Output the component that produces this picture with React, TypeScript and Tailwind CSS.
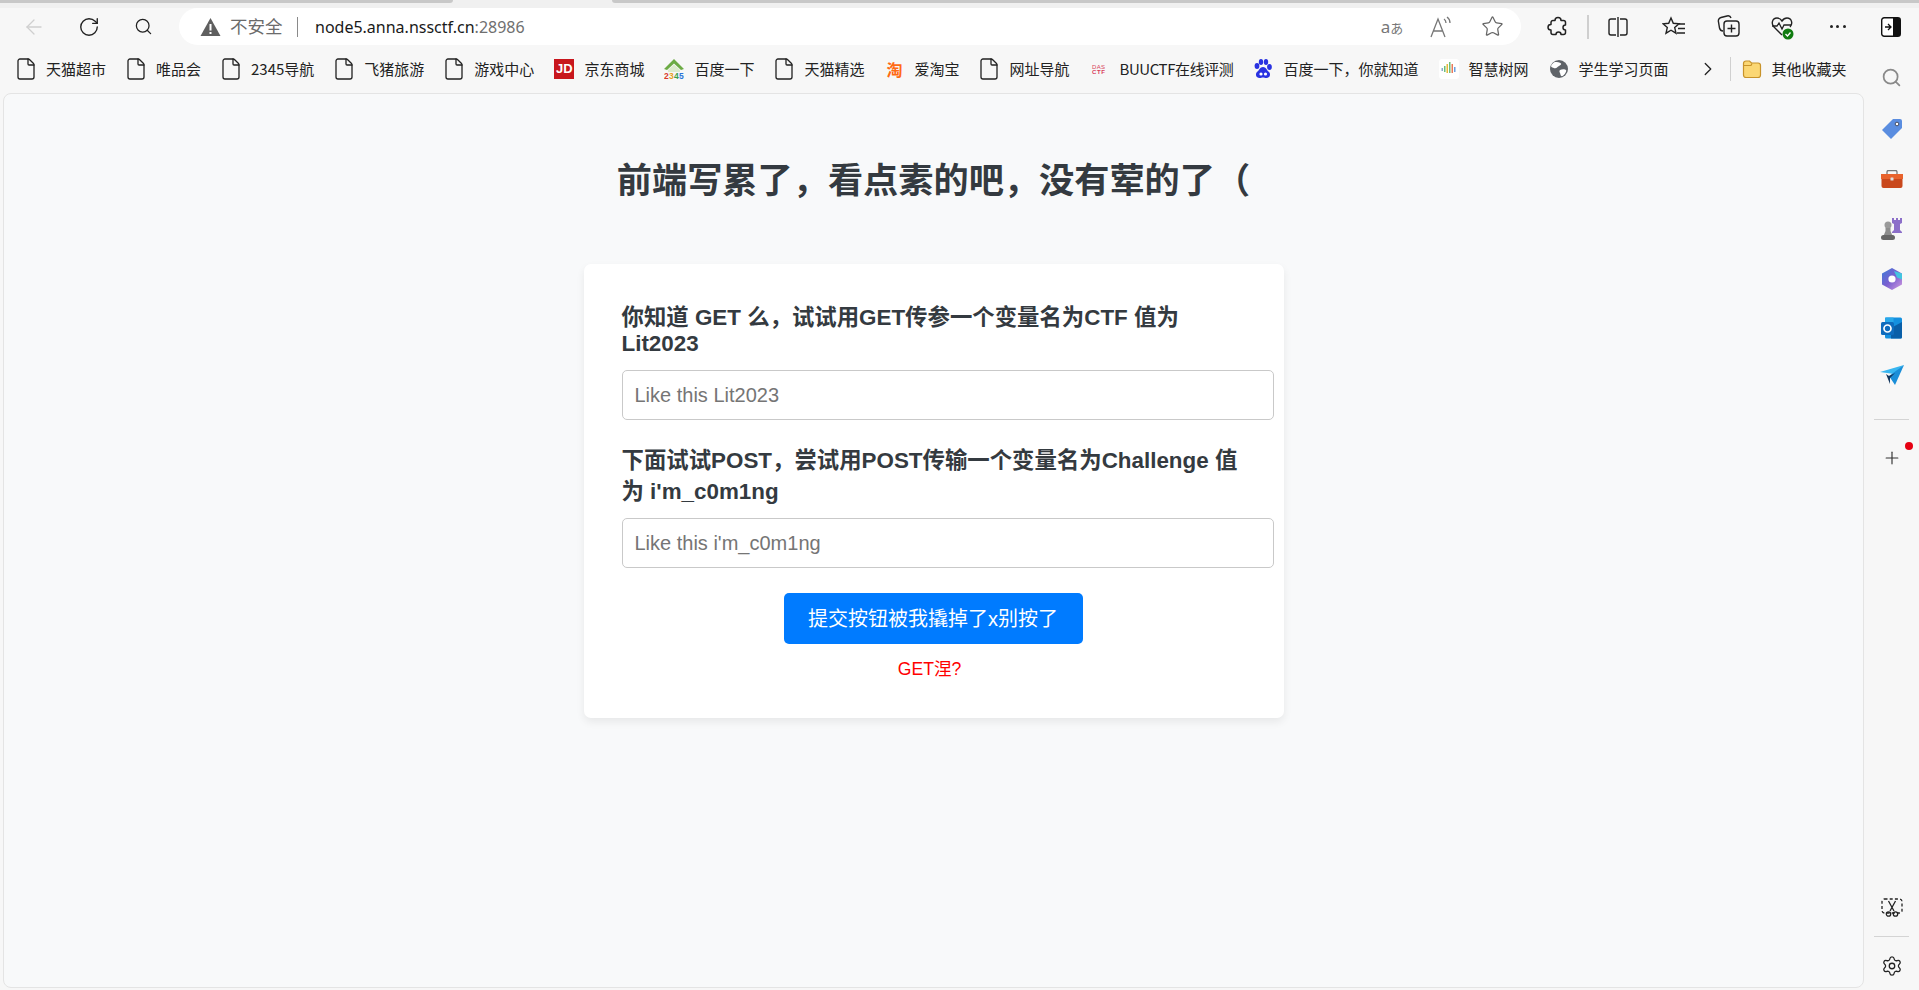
import React from 'react';
import { ArrowLeft, RotateCw, Search, Star, File, ChevronRight, Plus, Settings } from 'lucide-react';

const cjk = "font-['Liberation_Sans','Noto_Sans_CJK_SC',sans-serif]";

function Slot({ w, children }: { w: number; children: React.ReactNode }) {
  return (
    <div className="flex items-center justify-center shrink-0 h-full" style={{ width: w }}>
      {children}
    </div>
  );
}

const FileIcon = () => <File className="w-[24px] h-[24px] shrink-0 text-[#222]" strokeWidth={1.3} />;

const JdIcon = () => (
  <div className="w-[20px] h-[20px] bg-[#c8161d] text-white text-[13px] font-bold flex items-center justify-center font-['Liberation_Sans',sans-serif]">
    JD
  </div>
);

const HomeIcon = () => (
  <svg width="20" height="22" viewBox="0 0 20 22" className="shrink-0">
    <path d="M0 11 L10 1 L20 11 L17 12 L10 5.5 L3 12 Z" fill="#6cab45" />
    <path d="M4 12 L10 6.5 L16 12 L16 14 L4 14 Z" fill="#dcebcd" />
    <text x="0" y="21" fontSize="8.5" fontWeight="700" fontFamily="Liberation Sans" fill="#d93a2b">2</text>
    <text x="5" y="21" fontSize="8.5" fontWeight="700" fontFamily="Liberation Sans" fill="#e8a020">3</text>
    <text x="10" y="21" fontSize="8.5" fontWeight="700" fontFamily="Liberation Sans" fill="#3aa04a">4</text>
    <text x="15" y="21" fontSize="8.5" fontWeight="700" fontFamily="Liberation Sans" fill="#2a73d9">5</text>
  </svg>
);

const TaoIcon = () => (
  <div className="w-[20px] h-[20px] text-[#ff6a13] text-[16px] font-bold leading-none flex items-center justify-center font-['Noto_Sans_CJK_SC',sans-serif]">
    淘
  </div>
);

const BuuIcon = () => (
  <svg width="16" height="12" viewBox="0 0 16 12" className="shrink-0">
    <text x="1" y="5.5" fontSize="6" fontFamily="Liberation Sans" fill="#d8405a" textLength="13">DAS</text>
    <text x="1" y="11" fontSize="6" fontWeight="700" fontFamily="Liberation Sans" fill="#d8405a" textLength="13">CTF</text>
  </svg>
);

const BaiduIcon = () => (
  <svg width="20" height="22" viewBox="0 0 20 22" className="shrink-0">
    <g fill="#2932e1">
      <ellipse cx="4" cy="8" rx="2.4" ry="3" />
      <ellipse cx="8" cy="4" rx="2.2" ry="3" />
      <ellipse cx="13" cy="4" rx="2.2" ry="3" />
      <ellipse cx="16.5" cy="9" rx="2.4" ry="3" />
      <path d="M10 9c-3 0-3.5 3-6 5-2 2-1 6 2.5 6 1.5 0 2.5-.6 3.5-.6s2 .6 3.5.6c3.5 0 4.5-4 2.5-6-2.5-2-3-5-6-5z" />
    </g>
    <circle cx="8" cy="16" r="1.6" fill="#fff" />
    <circle cx="12.5" cy="16" r="1.6" fill="#fff" />
  </svg>
);

const BarsIcon = () => (
  <svg width="20" height="20" viewBox="0 0 20 20" className="shrink-0">
    <rect width="20" height="20" rx="3" fill="#fff" />
    <rect x="2.5" y="9" width="1.5" height="3" fill="#8ac" />
    <rect x="5" y="7" width="1.5" height="6" fill="#6bbf7a" />
    <rect x="7.5" y="5" width="1.5" height="9" fill="#e8b93a" />
    <rect x="10" y="3" width="1.5" height="11" fill="#6bbf7a" />
    <rect x="12.5" y="5" width="1.5" height="9" fill="#e87a5a" />
    <rect x="15" y="8" width="1.5" height="5" fill="#6a9fe0" />
  </svg>
);

const GlobeIcon = () => (
  <svg width="20" height="20" viewBox="0 0 20 20" className="shrink-0">
    <circle cx="10" cy="10" r="9" fill="#5f6368" />
    <path d="M6 3c2 0 5 0 6 1.5S9 7 8 8.5 4 9 2.5 8 4.5 3.5 6 3zM11 11c2-1 5-1 6 0s-1.5 5-3.5 6-2-2-2.5-3-1-2 0-3z" fill="#fff" />
  </svg>
);

const FolderIcon = () => (
  <svg width="20" height="20" viewBox="0 0 20 20" className="shrink-0">
    <path d="M1.5 4.5C1.5 3 2.5 2 4 2h3.5l2 2H16c1.5 0 2.5 1 2.5 2.5V16c0 1.5-1 2.5-2.5 2.5H4c-1.5 0-2.5-1-2.5-2.5z" fill="#fbd774" stroke="#c8932a" strokeWidth="1.2" />
    <path d="M1.5 6.5H9l1-2" fill="none" stroke="#c8932a" strokeWidth="1.2" />
  </svg>
);

const bookmarks: { icon: React.ReactNode; label: string; tight?: boolean }[] = [
  { icon: <FileIcon />, label: '天猫超市' },
  { icon: <FileIcon />, label: '唯品会' },
  { icon: <FileIcon />, label: '2345导航' },
  { icon: <FileIcon />, label: '飞猪旅游' },
  { icon: <FileIcon />, label: '游戏中心' },
  { icon: <JdIcon />, label: '京东商城' },
  { icon: <HomeIcon />, label: '百度一下' },
  { icon: <FileIcon />, label: '天猫精选' },
  { icon: <TaoIcon />, label: '爱淘宝' },
  { icon: <FileIcon />, label: '网址导航' },
  { icon: <BuuIcon />, label: 'BUUCTF在线评测', tight: true },
  { icon: <BaiduIcon />, label: '百度一下，你就知道' },
  { icon: <BarsIcon />, label: '智慧树网' },
  { icon: <GlobeIcon />, label: '学生学习页面' },
];

function TabStrip() {
  return (
    <div className="h-[8px] bg-[#f0f0f0] flex items-start shrink-0">
      <div className="w-[453px] h-[3px] bg-[#c8c8c8] rounded-br-[3px]" />
      <div className="ml-[159px] flex-1 h-[3px] bg-[#c8c8c8] rounded-bl-[3px]" />
    </div>
  );
}

function Toolbar() {
  return (
    <div className="h-[37px] flex items-center shrink-0 text-[#222]">
      <div className="w-[6px]" />
      <Slot w={56}><ArrowLeft className="w-[24px] h-[24px] text-[#cfcfcf]" strokeWidth={1.3} /></Slot>
      <Slot w={54}><RotateCw className="w-[22px] h-[22px]" strokeWidth={1.5} /></Slot>
      <Slot w={55}><Search className="w-[19px] h-[19px]" strokeWidth={1.6} /></Slot>
      <div className="ml-[8px] w-[1342px] h-[37px] bg-white rounded-full flex items-center pl-[21px] shrink-0">
        <svg width="21" height="20" viewBox="0 0 21 20" className="shrink-0">
          <path d="M10.5 1 L20.5 19 H0.5 Z" fill="#5f5f5f" />
          <rect x="9.5" y="7" width="2" height="6.5" fill="#fff" />
          <rect x="9.5" y="15" width="2" height="2" fill="#fff" />
        </svg>
        <span className="ml-[9px] text-[17.5px] text-[#6b6b6b] font-['Noto_Sans_CJK_SC',sans-serif]">不安全</span>
        <span className="ml-[14px] w-[1.5px] h-[20px] bg-[#8a8a8a]" />
        <span className="ml-[17px] text-[16px] text-[#1a1a1a] font-['Noto_Sans',sans-serif]">
          node5.anna.nssctf.cn<span className="text-[#6f6f6f]">:28986</span>
        </span>
        <div className="ml-auto flex items-center h-full pr-[4px]">
          <Slot w={50}>
            <span className="text-[17px] text-[#777] font-['Noto_Sans','Noto_Sans_CJK_JP',sans-serif]">a<span className="text-[13px]">あ</span></span>
          </Slot>
          <Slot w={50}>
            <svg width="26" height="24" viewBox="0 0 26 24" fill="none" stroke="#777" strokeWidth="1.3">
              <path d="M2 22 L9 4 L16 22 M4.5 16 H13.5" />
              <path d="M15 4c1.5 1 2 2.5 2 4M18 2c2 1.5 3 3.5 3 6" />
            </svg>
          </Slot>
          <Slot w={50}><Star className="w-[23px] h-[23px] text-[#666]" strokeWidth={1.3} /></Slot>
        </div>
      </div>
      <div className="w-[13px]" />
      <Slot w={48}>
        <svg width="22" height="22" viewBox="0 0 22 22" fill="none" stroke="#222" strokeWidth="1.5" strokeLinejoin="round">
          <path d="M11 1.5c2 0 3 1.5 3 3h2.5a2 2 0 0 1 2 2V9c-1.5 0-2.5 1-2.5 2.5s1 2.500 2.500 2.500v2.500a2 2 0 0 1-2 2H14c0-1.500-1-2.500-2.500-2.500S9 17 9 18.500H6a2 2 0 0 1-2-2V14c-1.500 0-3-1-3-2.800S2.500 8.500 4 8.500v-2a2 2 0 0 1 2-2h2c0-1.500 1-3 3-3z" />
        </svg>
      </Slot>
      <div className="w-[1.5px] h-[24px] bg-[#cfcfcf] ml-[5px] mr-[2px]" />
      <Slot w={54}>
        <svg width="22" height="22" viewBox="0 0 22 22" fill="none" stroke="#222" strokeWidth="1.4">
          <path d="M9 3H4a2 2 0 0 0-2 2v12a2 2 0 0 0 2 2h5M13 3h5a2 2 0 0 1 2 2v12a2 2 0 0 1-2 2h-5M11 1v20" />
        </svg>
      </Slot>
      <Slot w={58}>
        <svg width="24" height="22" viewBox="0 0 24 22" fill="none" stroke="#222" strokeWidth="1.4">
          <path d="M9 2l2.3 5.3 5.7.5-4.3 3.8 1.3 5.6L9 14.200 4 17.200l1.300-5.600L1 7.800l5.700-.5z" />
          <path d="M17 8h6M16 12.5h7M15 17h8" />
        </svg>
      </Slot>
      <Slot w={52}>
        <svg width="24" height="24" viewBox="0 0 24 24" fill="none" stroke="#222" strokeWidth="1.4">
          <path d="M6 16c-2 0-3-1-3.5-3L1.5 7C1 5 2 3 4 2.5l6-1.5c2-.5 3.5.5 4 2" />
          <rect x="7" y="6" width="15" height="15" rx="3" />
          <path d="M14.5 9.5v8M10.5 13.5h8" />
        </svg>
      </Slot>
      <Slot w={56}>
        <svg width="26" height="26" viewBox="0 0 26 26">
          <path d="M12 21L4 13C1 10 2 4 7 4c2.5 0 4 1.5 5 3 1-1.5 2.5-3 5-3 5 0 6 6 3 9" fill="none" stroke="#222" strokeWidth="1.4" />
          <path d="M2 12h5l2-3 3 6 2-4h7" fill="none" stroke="#222" strokeWidth="1.3" />
          <circle cx="18" cy="20" r="5.5" fill="#107c10" />
          <path d="M15.5 20l2 2 3-3.5" fill="none" stroke="#fff" strokeWidth="1.3" />
        </svg>
      </Slot>
      <Slot w={54}>
        <span className="flex gap-[3.5px]">
          <i className="w-[3px] h-[3px] rounded-full bg-[#222]" />
          <i className="w-[3px] h-[3px] rounded-full bg-[#222]" />
          <i className="w-[3px] h-[3px] rounded-full bg-[#222]" />
        </span>
      </Slot>
      <Slot w={52}>
        <svg width="20" height="20" viewBox="0 0 20 20">
          <rect x="0.7" y="0.7" width="18.6" height="18.6" rx="2.5" fill="#fff" stroke="#111" strokeWidth="1.4" />
          <path d="M12 1h5.5A1.5 1.5 0 0 1 19 2.5v15a1.5 1.5 0 0 1-1.5 1.5H12z" fill="#111" />
          <path d="M4 10h5.5M7 7l3 3-3 3" fill="none" stroke="#111" strokeWidth="1.3" />
        </svg>
      </Slot>
    </div>
  );
}

function BookmarkBar() {
  return (
    <div className="h-[48px] shrink-0 flex items-center pl-[16px] font-['Noto_Sans_CJK_SC',sans-serif] text-[15px] text-[#222]">
      <div className="flex items-center gap-[20px]">
        {bookmarks.map((b, i) => (
          <div key={i} className="flex items-center">
            <div className="w-[20px] flex items-center justify-center">{b.icon}</div>
            <span className={`ml-[10px] whitespace-nowrap ${b.tight ? 'tracking-[-0.4px]' : ''}`}>{b.label}</span>
          </div>
        ))}
      </div>
      <ChevronRight className="ml-[28px] w-[22px] h-[22px] text-[#222]" strokeWidth={1.4} />
      <div className="ml-[11px] w-px h-[24px] bg-[#d0d0d0]" />
      <div className="ml-[11px] flex items-center">
        <FolderIcon />
        <span className="ml-[10px] whitespace-nowrap">其他收藏夹</span>
      </div>
    </div>
  );
}

function Field({ label, placeholder, lineH, gap }: { label: string; placeholder: string; lineH: string; gap: string }) {
  return (
    <div>
      <label className={`block text-[22.4px] font-bold text-[#343a40] ${lineH}`}>{label}</label>
      <input
        placeholder={placeholder}
        className={`block ${gap} w-[652px] h-[50px] px-[12px] bg-white border border-[#c9c9c9] rounded-[5px] text-[20px] placeholder:text-[#757575] outline-none`}
      />
    </div>
  );
}

function Page() {
  return (
    <div className={`flex-1 min-w-0 bg-[#f8f9fa] border border-[#e4e4e4] rounded-[8px] ml-[3px] mb-[2px] flex flex-col items-center ${cjk}`}>
      <h1 className="mt-[61px] text-[35.2px] leading-[52px] font-bold text-[#343a40]">前端写累了，看点素的吧，没有荤的了（</h1>
      <div className="mt-[57px] w-[700px] h-[454px] bg-white rounded-[7px] shadow-[0_4px_8px_rgba(0,0,0,0.07)] pt-[41px] pl-[38px]">
        <div className="w-[624px] flex flex-col gap-[25px]">
          <Field lineH="leading-[26px]" gap="mt-[13px]" label="你知道 GET 么，试试用GET传参一个变量名为CTF 值为 Lit2023" placeholder="Like this Lit2023" />
          <Field lineH="leading-[31px]" gap="mt-[11px]" label="下面试试POST，尝试用POST传输一个变量名为Challenge 值为 i'm_c0m1ng" placeholder="Like this i'm_c0m1ng" />
        </div>
        <button className="block ml-[162px] mt-[25px] w-[299px] h-[51px] bg-[#007bff] text-white text-[20px] rounded-[5px]">
          提交按钮被我撬掉了x别按了
        </button>
        <p className="mt-[13px] leading-[24px] pr-[46px] text-center text-[17.6px] text-[#ff0000]">GET涅?</p>
      </div>
    </div>
  );
}

function Sidebar() {
  return (
    <div className="w-[55px] shrink-0 flex flex-col items-center pt-[22px]">
      <div className="h-[37px] w-full flex items-start justify-center">
        <Search className="w-[21px] h-[21px] text-[#8a8a8a]" strokeWidth={2} />
      </div>
      <div className="flex flex-col items-center">
        <div className="h-[50px] flex items-center">
          <svg width="22" height="22" viewBox="0 0 22 22"><path d="M12 1h7a2 2 0 0 1 2 2v7L10 21 1 12z" fill="#5a8de0" /><circle cx="16" cy="6" r="1.8" fill="#fff" stroke="#334" strokeWidth="0.8" /></svg>
        </div>
        <div className="h-[50px] flex items-center">
          <svg width="24" height="18" viewBox="0 0 24 18"><path d="M7 4V2a1.5 1.5 0 0 1 1.5-1.5h7A1.5 1.5 0 0 1 17 2v2" fill="none" stroke="#777" strokeWidth="1.3" /><path d="M1 4h22v5H1z" fill="#e8622c" /><path d="M1.5 9h21v7a2 2 0 0 1-2 2h-17a2 2 0 0 1-2-2z" fill="#c9481c" /><rect x="10.5" y="7.5" width="3" height="3" rx="0.5" fill="#ddd" /></svg>
        </div>
        <div className="h-[50px] flex items-center">
          <svg width="23" height="22" viewBox="0 0 23 22"><path d="M12 0h2v2h2V0h2v2h2V0h2v5l-2 1v6l2 2v1H12v-1l2-2V6l-2-1z" fill="#8c6fc9" /><circle cx="8" cy="7" r="3.5" fill="#9a9a9a" /><path d="M5.5 10h5v3l2 5h-9l2-5z" fill="#8d8d8d" /><rect x="1" y="17" width="14" height="5" rx="2.5" fill="#666" /></svg>
        </div>
        <div className="h-[50px] flex items-center">
          <svg width="20" height="22" viewBox="0 0 20 22"><defs><linearGradient id="m1" x1="0" y1="0" x2="1" y2="1"><stop offset="0" stopColor="#3b7bd8" /><stop offset="0.5" stopColor="#7a5fd0" /><stop offset="1" stopColor="#d29be0" /></linearGradient></defs><path d="M10 0l10 5.5v11L10 22 0 16.5v-11z" fill="url(#m1)" /><path d="M12 3l8 2.5v6l-5-2z" fill="#42c5e0" /><circle cx="10" cy="11" r="3.6" fill="#fff" /></svg>
        </div>
        <div className="h-[48px] flex items-center">
          <svg width="22" height="22" viewBox="0 0 22 22"><rect x="4" y="0.5" width="17" height="21" rx="1.5" fill="#1490df" /><path d="M4 0.5h8.5v6H4z" fill="#28a8ea" /><path d="M10 11l11-6v15a1.5 1.5 0 0 1-1.5 1.5H10z" fill="#0a5fa8" /><rect x="0" y="5" width="13" height="13" rx="1.5" fill="#0f6cbd" /><circle cx="6.5" cy="11.5" r="3.5" fill="none" stroke="#fff" strokeWidth="1.7" /></svg>
        </div>
        <div className="h-[46px] flex items-center">
          <svg width="24" height="20" viewBox="0 0 24 20"><path d="M0 7L24 0 14 9z" fill="#38b6f0" /><path d="M24 0L15 20 9 11z" fill="#1a8ed8" /><path d="M6 9l3 2 6-3-5 5v6z" fill="#12365c" /></svg>
        </div>
      </div>
      <div className="mt-[21px] w-[35px] h-px bg-[#d4d4d4]" />
      <div className="relative mt-[28px]">
        <Plus className="w-[20px] h-[20px] text-[#333]" strokeWidth={1.4} />
        <span className="absolute -top-[6px] left-[23px] w-[8px] h-[8px] rounded-full bg-[#e60012]" />
      </div>
      <div className="mt-auto flex flex-col items-center mb-[13px]">
        <svg width="22" height="20" viewBox="0 0 22 20" fill="none" stroke="#222" strokeWidth="1.3">
          <rect x="1" y="1" width="20" height="14" rx="2.5" strokeDasharray="3 2.2" />
          <path d="M7.5 3l5.5 10M14.5 3L9 13" />
          <circle cx="7.5" cy="16" r="2.2" />
          <circle cx="14.5" cy="16" r="2.2" />
        </svg>
        <div className="mt-[18px] w-[35px] h-px bg-[#d4d4d4]" />
        <Settings className="mt-[18px] w-[22px] h-[22px] text-[#222]" strokeWidth={1.4} />
      </div>
    </div>
  );
}

export default function App() {
  return (
    <div className="w-[1919px] h-[990px] bg-[#f7f7f7] flex flex-col overflow-hidden">
      <TabStrip />
      <Toolbar />
      <div className="flex-1 min-h-0 flex">
        <div className="flex-1 min-w-0 flex flex-col">
          <BookmarkBar />
          <Page />
        </div>
        <Sidebar />
      </div>
    </div>
  );
}
